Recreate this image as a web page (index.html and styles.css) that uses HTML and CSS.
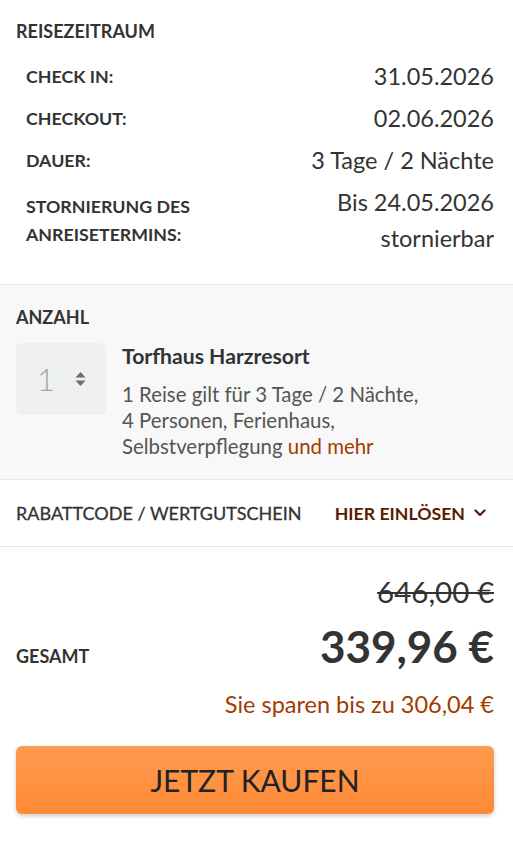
FILE: index.html
```html
<!DOCTYPE html>
<html lang="de">
<head>
<meta charset="utf-8">
<link rel="stylesheet" href="styles.css">
</head>
<body>
<div class="panel">
  <section class="period">
    <h2 class="heading">REISEZEITRAUM</h2>
    <div class="row">
      <div class="label">CHECK IN:</div>
      <div class="value">31.05.2026</div>
    </div>
    <div class="row">
      <div class="label">CHECKOUT:</div>
      <div class="value">02.06.2026</div>
    </div>
    <div class="row">
      <div class="label">DAUER:</div>
      <div class="value">3 Tage / 2 Nächte</div>
    </div>
    <div class="row">
      <div class="label">STORNIERUNG DES<br>ANREISETERMINS:</div>
      <div class="value">Bis 24.05.2026<br>stornierbar</div>
    </div>
  </section>

  <section class="amount">
    <h2 class="heading">ANZAHL</h2>
    <div class="product">
      <div class="qty">
        <span class="qty-num">1</span>
        <svg class="qty-arrows" width="11" height="16" viewBox="0 0 11 16"><path d="M5.5 1 L10.5 6.5 H0.5 Z M5.5 15 L10.5 9.5 H0.5 Z" fill="#6b6e72"/></svg>
      </div>
      <div class="info">
        <div class="title">Torfhaus Harzresort</div>
        <div class="desc">1 Reise gilt für 3 Tage / 2 Nächte,<br>4 Personen, Ferienhaus,<br>Selbstverpflegung <a class="more">und mehr</a></div>
      </div>
    </div>
  </section>

  <section class="voucher">
    <span class="voucher-label">RABATTCODE / WERTGUTSCHEIN</span>
    <span class="voucher-link">HIER EINLÖSEN
      <svg class="chev" width="12" height="8" viewBox="0 0 12 8"><path d="M1.5 1.5 L6 6 L10.5 1.5" fill="none" stroke="#5a1c00" stroke-width="2.2" stroke-linecap="round" stroke-linejoin="round"/></svg>
    </span>
  </section>

  <section class="totals">
    <div class="old-price">646,00 €</div>
    <div class="total-row">
      <span class="total-label">GESAMT</span>
      <span class="total-price">339,96 €</span>
    </div>
    <div class="savings">Sie sparen bis zu 306,04 €</div>
    <button class="buy">JETZT KAUFEN</button>
  </section>
</div>
</body>
</html>
```
FILE: styles.css
```css
* { box-sizing: border-box; }
html, body { margin: 0; padding: 0; background: #fff; }
body {
  font-family: Lato, "Noto Sans", sans-serif;
  color: #333;
  width: 513px;
}
.heading {
  margin: 0;
  font-size: 18px;
  line-height: 20px;
  font-weight: 700;
  color: #333;
}
.period {
  padding: 21px 19px 28px 16px;
  border-bottom: 1px solid #e6e6e6;
}
.period .heading { margin-bottom: 17px; }
.row {
  display: flex;
  justify-content: space-between;
  align-items: center;
  padding-left: 10px;
  margin-top: 6px;
}
.period .heading + .row { margin-top: 0; }
.label {
  font-size: 17.8px;
  line-height: 28px;
  font-weight: 700;
  color: #333;
}
.value {
  font-size: 23.5px;
  line-height: 36px;
  text-align: right;
  color: #333;
}
.amount {
  background: #f8f8f8;
  padding: 22px 19px 20px 16px;
  border-bottom: 1px solid #e6e6e6;
}
.amount .heading { margin-bottom: 16px; }
.product { display: flex; gap: 16px; }
.qty {
  width: 90px;
  height: 72px;
  flex: none;
  background: #eef0f2;
  border-radius: 6px;
  display: flex;
  align-items: center;
  padding-left: 21px;
}
.qty-num {
  font-size: 31px;
  font-weight: 300;
  color: #a3a7ab;
  width: 38px;
}
.qty-arrows { display: block; }
.title {
  font-size: 21.2px;
  line-height: 26px;
  font-weight: 700;
  color: #333;
}
.desc {
  margin-top: 12px;
  font-size: 20.4px;
  line-height: 26px;
  color: #555;
}
.more { color: #a23b00; }
.voucher {
  height: 67px;
  border-bottom: 1px solid #e6e6e6;
  display: flex;
  align-items: center;
  justify-content: space-between;
  padding: 0 27px 0 16px;
}
.voucher-label {
  font-size: 18px;
  color: #333;
  -webkit-text-stroke: 0.3px #333;
}
.voucher-link {
  font-size: 17.7px;
  font-weight: 700;
  color: #5a1c00;
  display: flex;
  align-items: center;
  gap: 9px;
}
.chev { display: block; }
.totals {
  padding: 28px 19px 30px 16px;
  display: flex;
  flex-direction: column;
}
.old-price {
  text-align: right;
  font-size: 29.5px;
  line-height: 34px;
  text-decoration: line-through;
  color: #333;
}
.total-row {
  margin-top: 11px;
  display: flex;
  justify-content: space-between;
  align-items: baseline;
}
.total-label {
  font-size: 18px;
  font-weight: 700;
}
.total-price {
  font-size: 44px;
  line-height: 52px;
  font-weight: 700;
  color: #333;
}
.savings {
  margin-top: 17px;
  text-align: right;
  font-size: 23.5px;
  line-height: 30px;
  color: #a23b00;
}
.buy {
  margin-top: 27px;
  height: 68px;
  width: 100%;
  border: 0;
  border-radius: 6px;
  background: linear-gradient(#ff9a50, #ff8a36);
  box-shadow: 0 2px 4px rgba(0,0,0,0.2);
  font-family: Lato, "Noto Sans", sans-serif;
  font-size: 30px;
  color: #222;
  cursor: pointer;
}
```
